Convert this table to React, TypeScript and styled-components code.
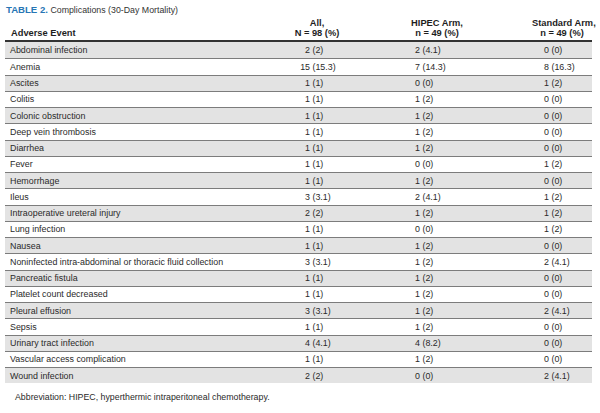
import styled, { createGlobalStyle } from "styled-components";

/**
 * Table 2 - complications (30-day mortality)
 */

interface Row {
  event: string;
  all: [string, string];
  hipec: [string, string];
  standard: [string, string];
}

const rows: Row[] = [
  { event: "Abdominal infection", all: ["2", "(2)"], hipec: ["2", "(4.1)"], standard: ["0", "(0)"] },
  { event: "Anemia", all: ["15", "(15.3)"], hipec: ["7", "(14.3)"], standard: ["8", "(16.3)"] },
  { event: "Ascites", all: ["1", "(1)"], hipec: ["0", "(0)"], standard: ["1", "(2)"] },
  { event: "Colitis", all: ["1", "(1)"], hipec: ["1", "(2)"], standard: ["0", "(0)"] },
  { event: "Colonic obstruction", all: ["1", "(1)"], hipec: ["1", "(2)"], standard: ["0", "(0)"] },
  { event: "Deep vein thrombosis", all: ["1", "(1)"], hipec: ["1", "(2)"], standard: ["0", "(0)"] },
  { event: "Diarrhea", all: ["1", "(1)"], hipec: ["1", "(2)"], standard: ["0", "(0)"] },
  { event: "Fever", all: ["1", "(1)"], hipec: ["0", "(0)"], standard: ["1", "(2)"] },
  { event: "Hemorrhage", all: ["1", "(1)"], hipec: ["1", "(2)"], standard: ["0", "(0)"] },
  { event: "Ileus", all: ["3", "(3.1)"], hipec: ["2", "(4.1)"], standard: ["1", "(2)"] },
  { event: "Intraoperative ureteral injury", all: ["2", "(2)"], hipec: ["1", "(2)"], standard: ["1", "(2)"] },
  { event: "Lung infection", all: ["1", "(1)"], hipec: ["0", "(0)"], standard: ["1", "(2)"] },
  { event: "Nausea", all: ["1", "(1)"], hipec: ["1", "(2)"], standard: ["0", "(0)"] },
  {
    event: "Noninfected intra-abdominal or thoracic fluid collection",
    all: ["3", "(3.1)"],
    hipec: ["1", "(2)"],
    standard: ["2", "(4.1)"],
  },
  { event: "Pancreatic fistula", all: ["1", "(1)"], hipec: ["1", "(2)"], standard: ["0", "(0)"] },
  { event: "Platelet count decreased", all: ["1", "(1)"], hipec: ["1", "(2)"], standard: ["0", "(0)"] },
  { event: "Pleural effusion", all: ["3", "(3.1)"], hipec: ["1", "(2)"], standard: ["2", "(4.1)"] },
  { event: "Sepsis", all: ["1", "(1)"], hipec: ["1", "(2)"], standard: ["0", "(0)"] },
  { event: "Urinary tract infection", all: ["4", "(4.1)"], hipec: ["4", "(8.2)"], standard: ["0", "(0)"] },
  { event: "Vascular access complication", all: ["1", "(1)"], hipec: ["1", "(2)"], standard: ["0", "(0)"] },
  { event: "Wound infection", all: ["2", "(2)"], hipec: ["0", "(0)"], standard: ["2", "(4.1)"] },
];

const GlobalStyle = createGlobalStyle`
  html, body {
    margin: 0;
    padding: 0;
    background: #ffffff;
  }
`;

export default function App() {
  return (
    <>
      <GlobalStyle />
      <Page>
        <Caption>
          <CaptionLabel>TABLE 2.</CaptionLabel> Complications (30-Day Mortality)
        </Caption>

        <Table>
          <HeaderRow>
            <HeadCell $align="left">Adverse Event</HeadCell>
            <HeadCell $shift={2}>
              All,
              <br />N = 98 (%)
            </HeadCell>
            <HeadCell>
              HIPEC Arm,
              <br />n = 49 (%)
            </HeadCell>
            <HeadCell $shift={34}>
              Standard Arm,
              <br />n = 49 (%)
            </HeadCell>
          </HeaderRow>

          {rows.map((row, i) => (
            <BodyRow key={row.event} $shaded={i % 2 === 0} $first={i === 0}>
              <EventCell>{row.event}</EventCell>
              <ValueCell $pad={44}>
                <Count>{row.all[0]}</Count> {row.all[1]}
              </ValueCell>
              <ValueCell $pad={34}>
                <Count>{row.hipec[0]}</Count> {row.hipec[1]}
              </ValueCell>
              <ValueCell $pad={41}>
                <Count>{row.standard[0]}</Count> {row.standard[1]}
              </ValueCell>
            </BodyRow>
          ))}
        </Table>

        <Footnote>Abbreviation: HIPEC, hyperthermic intraperitoneal chemotherapy.</Footnote>
      </Page>
    </>
  );
}

const Page = styled.div`
  width: 600px;
  height: 413px;
  box-sizing: border-box;
  padding: 5px 8px 0 5px;
  font-family: "Liberation Sans", Arial, sans-serif;
  color: #2a2a2a;
  overflow: hidden;
`;

const Caption = styled.div`
  height: 10px;
  line-height: 10px;
  padding-left: 1px;
  font-size: 8.8px;
  color: #333333;
  white-space: nowrap;
`;

const CaptionLabel = styled.span`
  font-family: "Liberation Sans Narrow", "Liberation Sans", sans-serif;
  font-weight: bold;
  font-size: 9.6px;
  color: #2776b5;
`;

const Table = styled.div`
  margin-top: 4px;
  width: 587px;
  display: flex;
  flex-direction: column;
`;

const columns = "251px 120px 122px 94px";

const HeaderRow = styled.div`
  display: grid;
  grid-template-columns: ${columns};
  align-items: end;
  padding-bottom: 2px;
  border-bottom: 2px solid #333333;
`;

const HeadCell = styled.div<{ $align?: "left" | "center"; $shift?: number }>`
  text-align: ${({ $align }) => $align ?? "center"};
  padding-left: ${({ $align, $shift }) => ($align === "left" ? 6 : $shift ?? 0)}px;
  font-family: "Liberation Sans Narrow", "Liberation Sans", sans-serif;
  font-weight: bold;
  font-size: 9.3px;
  line-height: 9.5px;
  color: #1e1e1e;
  white-space: nowrap;
`;

const BodyRow = styled.div<{ $shaded: boolean; $first: boolean }>`
  display: grid;
  grid-template-columns: ${columns};
  align-items: center;
  box-sizing: border-box;
  height: 16.25px;
  border-top: ${({ $first }) => ($first ? "none" : "1px solid #7c7c7c")};
  background: ${({ $shaded }) => ($shaded ? "#e3e3e3" : "#ffffff")};
  font-size: 8.9px;
  line-height: 10px;
  color: #2a2a2a;
`;

const EventCell = styled.div`
  padding-left: 5px;
  white-space: nowrap;
`;

const ValueCell = styled.div<{ $pad: number }>`
  padding-left: ${({ $pad }) => $pad}px;
  white-space: nowrap;
`;

const Count = styled.span`
  display: inline-block;
  min-width: 10px;
  text-align: right;
`;

const Footnote = styled.div`
  margin-top: 9px;
  padding-left: 10px;
  font-size: 8.8px;
  line-height: 10px;
  color: #2a2a2a;
`;
